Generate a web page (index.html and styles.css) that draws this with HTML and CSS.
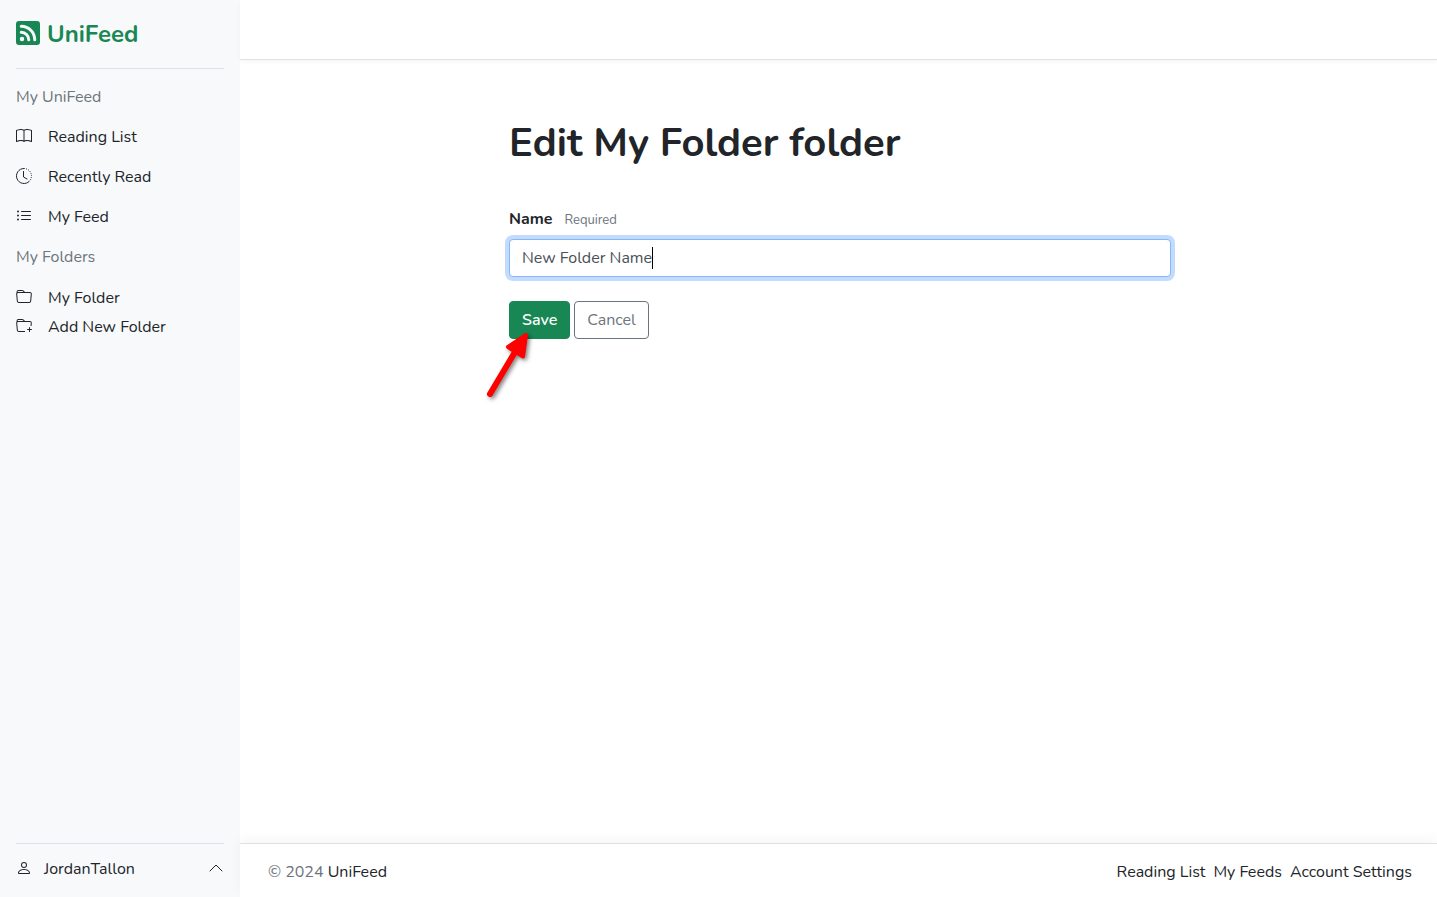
FILE: index.html
```html
<!DOCTYPE html>
<html lang="en">
<head>
<meta charset="utf-8">
<meta name="viewport" content="width=device-width, initial-scale=1">
<title>UniFeed - Edit folder</title>
<link rel="stylesheet" href="styles.css">
</head>
<body class="app">
<aside class="sidebar">
  <a class="brand" href="#">
    <svg class="brand-icon" viewBox="0 0 16 16" fill="currentColor" aria-hidden="true"><path d="M2 0a2 2 0 0 0-2 2v12a2 2 0 0 0 2 2h12a2 2 0 0 0 2-2V2a2 2 0 0 0-2-2zm1.500 2.500c5.523 0 10 4.477 10 10a1 1 0 1 1-2 0 8 8 0 0 0-8-8 1 1 0 0 1 0-2m0 4a6 6 0 0 1 6 6 1 1 0 1 1-2 0 4 4 0 0 0-4-4 1 1 0 0 1 0-2m.5 7a1.500 1.500 0 1 1 0-3 1.500 1.500 0 0 1 0 3"/></svg>
    <span>UniFeed</span>
  </a>
  <nav class="side-nav">
    <h2 class="nav-title">My UniFeed</h2>
    <a class="nav-link" href="#">
      <svg class="icon" viewBox="0 0 16 16" fill="currentColor" aria-hidden="true"><path d="M1 2.828c.885-.37 2.154-.769 3.388-.893 1.330-.134 2.458.063 3.112.752v9.746c-.935-.53-2.120-.603-3.213-.493-1.180.12-2.370.461-3.287.811zm7.500-.141c.654-.689 1.782-.886 3.112-.752 1.234.124 2.503.523 3.388.893v9.923c-.918-.35-2.107-.692-3.287-.81-1.094-.111-2.278-.039-3.213.492zM8 1.783C7.015.936 5.587.81 4.287.94c-1.514.153-3.042.672-3.994 1.105A.5.5 0 0 0 0 2.500v11a.5.5 0 0 0 .707.455c.882-.4 2.303-.881 3.680-1.020 1.409-.142 2.590.087 3.223.877a.5.5 0 0 0 .78 0c.633-.79 1.814-1.019 3.222-.877 1.378.139 2.800.62 3.681 1.020A.5.5 0 0 0 16 13.500v-11a.5.5 0 0 0-.293-.455c-.952-.433-2.480-.952-3.994-1.105C10.413.809 8.985.936 8 1.783"/></svg>
      <span>Reading List</span>
    </a>
    <a class="nav-link" href="#">
      <svg class="icon" viewBox="0 0 16 16" fill="none" stroke="currentColor" aria-hidden="true"><path d="M8 .5a7.500 7.500 0 1 0 5.300 12.800"/><path d="M8 .5a7.500 7.500 0 0 1 5.300 12.800" stroke-dasharray="1 1.100"/><path d="M7.500 3.500v5.500l3.500 2" stroke-linecap="round" stroke-linejoin="round"/></svg>
      <span>Recently Read</span>
    </a>
    <a class="nav-link" href="#">
      <svg class="icon" viewBox="0 0 16 16" fill="currentColor" aria-hidden="true"><path fill-rule="evenodd" d="M5 11.500a.5.5 0 0 1 .5-.5h9a.5.5 0 0 1 0 1h-9a.5.5 0 0 1-.5-.5m0-4a.5.5 0 0 1 .5-.5h9a.5.5 0 0 1 0 1h-9a.5.5 0 0 1-.5-.5m0-4a.5.5 0 0 1 .5-.5h9a.5.5 0 0 1 0 1h-9a.5.5 0 0 1-.5-.5m-3 1a1 1 0 1 0 0-2 1 1 0 0 0 0 2m0 4a1 1 0 1 0 0-2 1 1 0 0 0 0 2m0 4a1 1 0 1 0 0-2 1 1 0 0 0 0 2"/></svg>
      <span>My Feed</span>
    </a>
    <h2 class="nav-title">My Folders</h2>
    <div class="folders">
      <a class="nav-link folder" href="#">
        <svg class="icon" viewBox="0 0 16 16" fill="currentColor" aria-hidden="true"><path d="M.54 3.870.5 3a2 2 0 0 1 2-2h3.672a2 2 0 0 1 1.414.586l.828.828A2 2 0 0 0 9.828 3h3.982a2 2 0 0 1 1.992 2.181l-.637 7A2 2 0 0 1 13.174 14H2.826a2 2 0 0 1-1.991-1.819l-.637-7a2 2 0 0 1 .342-1.310zM2.190 4a1 1 0 0 0-.996 1.090l.637 7a1 1 0 0 0 .995.910h10.348a1 1 0 0 0 .995-.910l.637-7A1 1 0 0 0 13.810 4zm4.690-1.707A1 1 0 0 0 6.172 2H2.500a1 1 0 0 0-1 .981l.006.139q.323-.119.684-.120h5.396z"/></svg>
        <span>My Folder</span>
      </a>
      <a class="nav-link folder" href="#">
        <svg class="icon" viewBox="0 0 16 16" fill="currentColor" aria-hidden="true"><path d="m.5 3 .04.870a2 2 0 0 0-.342 1.311l.637 7A2 2 0 0 0 2.826 14H9v-1H2.826a1 1 0 0 1-.995-.910l-.637-7A1 1 0 0 1 2.190 4h11.620a1 1 0 0 1 .996 1.090L14.540 8h1.005l.256-2.819A2 2 0 0 0 13.810 3H9.828a2 2 0 0 1-1.414-.586l-.828-.828A2 2 0 0 0 6.172 1H2.500a2 2 0 0 0-2 2m5.672-1a1 1 0 0 1 .707.293L7.586 3H2.190q-.362.002-.683.120L1.500 2.980a1 1 0 0 1 1-.980z"/><path d="M13.500 9a.5.5 0 0 1 .5.5V11h1.500a.5.5 0 1 1 0 1H14v1.500a.5.5 0 1 1-1 0V12h-1.500a.5.5 0 0 1 0-1H13V9.500a.5.5 0 0 1 .5-.5"/></svg>
        <span>Add New Folder</span>
      </a>
    </div>
  </nav>
  <button class="account" type="button">
    <svg class="icon" viewBox="0 0 16 16" fill="currentColor" aria-hidden="true"><path d="M8 8a3 3 0 1 0 0-6 3 3 0 0 0 0 6m2-3a2 2 0 1 1-4 0 2 2 0 0 1 4 0m4 8c0 1-1 1-1 1H3s-1 0-1-1 1-4 6-4 6 3 6 4m-1-.004c-.001-.246-.154-.986-.832-1.664C11.516 10.680 10.289 10 8 10s-3.516.68-4.168 1.332c-.678.678-.83 1.418-.832 1.664z"/></svg>
    <span class="account-name">JordanTallon</span>
    <svg class="icon" viewBox="0 0 16 16" fill="none" stroke="currentColor" stroke-linecap="round" stroke-linejoin="round" aria-hidden="true"><path d="M2 11l6-6 6 6"/></svg>
  </button>
</aside>
<div class="page">
  <header class="topbar"></header>
  <main class="content">
    <form class="edit-form">
      <h1 class="title">Edit My Folder folder</h1>
      <div class="label-row">
        <label class="label" for="name">Name</label>
        <small class="hint">Required</small>
      </div>
      <div class="field">
        <input class="input" id="name" type="text" value="New Folder Name" required>
        <span class="caret"></span>
      </div>
      <div class="actions">
        <button class="btn btn-save" type="submit">Save</button>
        <button class="btn btn-cancel" type="button">Cancel</button>
        <svg class="arrow" viewBox="0 0 56 76" aria-hidden="true"><path d="M10 64 35 22" stroke="#f00" stroke-width="6" stroke-linecap="round"/><path d="M46 5 28 17 43 26.500Z" fill="#f00" stroke="#f00" stroke-width="4" stroke-linejoin="round"/></svg>
      </div>
    </form>
  </main>
  <footer class="footer">
    <p class="copyright">© 2024 <a class="link" href="#">UniFeed</a></p>
    <nav class="footer-nav">
      <a class="link" href="#">Reading List</a>
      <a class="link" href="#">My Feeds</a>
      <a class="link" href="#">Account Settings</a>
    </nav>
  </footer>
</div>
</body>
</html>
```
FILE: styles.css
```css
* { box-sizing: border-box; }

.app {
  margin: 0;
  min-height: 100vh;
  display: flex;
  background: #fff;
  color: #212529;
  font: 400 16px/24px Nunito, Lato, sans-serif;
}

a { color: inherit; text-decoration: none; }

.sidebar {
  width: 240px;
  flex: none;
  display: flex;
  flex-direction: column;
  padding: 0 16px;
  background: #f8f9fb;
}

.brand {
  display: flex;
  align-items: center;
  gap: 7px;
  height: 69px;
  border-bottom: 1px solid #dee2e6;
  color: #198754;
  font-size: 24px;
  font-weight: 700;
}

.brand-icon { width: 24px; height: 24px; margin-bottom: 2px; }

.side-nav { flex: 1; padding-top: 8px; }

.nav-title {
  margin: 0;
  font-size: 16px;
  font-weight: 400;
  line-height: 40px;
  color: #6c757d;
}

.nav-link {
  display: flex;
  align-items: center;
  gap: 16px;
  height: 40px;
}

.folders { padding-top: 6px; }
.folder { height: 29px; }

.icon { width: 16px; height: 16px; flex: none; margin-bottom: 2px; }

.account {
  display: flex;
  align-items: center;
  gap: 12px;
  height: 54px;
  padding: 0 0 4px;
  border: 0;
  border-top: 1px solid #dee2e6;
  background: none;
  color: inherit;
  font: inherit;
  text-align: left;
}

.account-name { flex: 1; }

.page { flex: 1; display: flex; flex-direction: column; }

.topbar {
  height: 60px;
  border-bottom: 1px solid #dee2e6;
  box-shadow: 0 2px 4px rgba(0, 0, 0, .04);
}

.content { flex: 1; padding: 59px 25px 24px 28px; }

.edit-form { max-width: 662px; margin: 0 auto; }

.title {
  margin: 0 0 40px;
  font-size: 40px;
  line-height: 48px;
  font-weight: 700;
}

.label-row { display: flex; align-items: baseline; gap: 12px; margin-bottom: 8px; height: 24px; }
.label { font-weight: 700; }
.hint { font-size: 13px; color: #6c757d; }

.field { position: relative; margin-bottom: 24px; }

.input {
  display: block;
  width: 100%;
  height: 38px;
  padding: 6px 12px;
  border: 1px solid #86b7fe;
  border-radius: 4px;
  outline: 0;
  box-shadow: 0 0 0 4px #c2dbfe;
  color: #495057;
  font: inherit;
}

.caret {
  position: absolute;
  left: 143px;
  top: 8px;
  width: 1px;
  height: 22px;
  background: #000;
}

.actions { position: relative; display: flex; gap: 4px; }

.btn {
  height: 38px;
  padding: 6px 12px;
  border: 1px solid;
  border-radius: 4px;
  font: inherit;
}

.btn-save { border-color: #198754; background: #198754; color: #fff; font-weight: 600; }
.btn-cancel { border-color: #6c757d; background: #fff; color: #6c757d; }

.arrow {
  position: absolute;
  left: -29px;
  top: 29px;
  width: 56px;
  height: 76px;
  fill: none;
  filter: drop-shadow(2px 2px 2px rgba(0, 0, 0, .5));
}

.footer {
  display: flex;
  align-items: center;
  justify-content: space-between;
  height: 54px;
  padding: 2px 25px 0 28px;
  border-top: 1px solid #dee2e6;
  box-shadow: 0 -4px 12px rgba(0, 0, 0, .04);
}

.copyright { margin: 0; color: #6c757d; }
.link { color: #212529; }
.footer-nav { display: flex; gap: 8px; }
```
